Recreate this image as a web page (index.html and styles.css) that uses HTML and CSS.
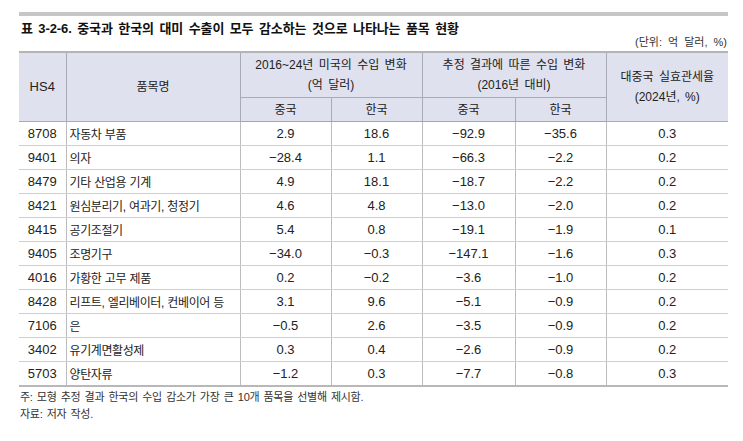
FILE: index.html
```html
<!DOCTYPE html>
<html lang="ko">
<head>
<meta charset="utf-8">
<link rel="stylesheet" href="styles.css">
</head>
<body>
<div class="page">
  <div class="topbar"></div>
  <div class="caption">
    <div class="title">표 3-2-6. 중국과 한국의 대미 수출이 모두 감소하는 것으로 나타나는 품목 현황</div>
    <div class="unit">(단위: 억 달러, %)</div>
  </div>
  <table class="tbl">
    <colgroup>
      <col class="c-hs"><col class="c-name"><col class="c-v"><col class="c-v"><col class="c-v2"><col class="c-v"><col class="c-rate">
    </colgroup>
    <thead>
      <tr class="h1">
        <th rowspan="2" class="num">HS4</th>
        <th rowspan="2">품목명</th>
        <th colspan="2">2016~24년 미국의 수입 변화<br>(억 달러)</th>
        <th colspan="2">추정 결과에 따른 수입 변화<br>(2016년 대비)</th>
        <th rowspan="2">대중국 실효관세율<br>(2024년, %)</th>
      </tr>
      <tr class="h2">
        <th class="sub">중국</th>
        <th class="sub">한국</th>
        <th class="sub">중국</th>
        <th class="sub">한국</th>
      </tr>
    </thead>
    <tbody>
      <tr><td class="num">8708</td><td class="name">자동차 부품</td><td class="num">2.9</td><td class="num lt">18.6</td><td class="num">−92.9</td><td class="num lt">−35.6</td><td class="num">0.3</td></tr>
      <tr><td class="num">9401</td><td class="name">의자</td><td class="num">−28.4</td><td class="num lt">1.1</td><td class="num">−66.3</td><td class="num lt">−2.2</td><td class="num">0.2</td></tr>
      <tr><td class="num">8479</td><td class="name">기타 산업용 기계</td><td class="num">4.9</td><td class="num lt">18.1</td><td class="num">−18.7</td><td class="num lt">−2.2</td><td class="num">0.2</td></tr>
      <tr><td class="num">8421</td><td class="name">원심분리기, 여과기, 청정기</td><td class="num">4.6</td><td class="num lt">4.8</td><td class="num">−13.0</td><td class="num lt">−2.0</td><td class="num">0.2</td></tr>
      <tr><td class="num">8415</td><td class="name">공기조절기</td><td class="num">5.4</td><td class="num lt">0.8</td><td class="num">−19.1</td><td class="num lt">−1.9</td><td class="num">0.1</td></tr>
      <tr><td class="num">9405</td><td class="name">조명기구</td><td class="num">−34.0</td><td class="num lt">−0.3</td><td class="num">−147.1</td><td class="num lt">−1.6</td><td class="num">0.3</td></tr>
      <tr><td class="num">4016</td><td class="name">가황한 고무 제품</td><td class="num">0.2</td><td class="num lt">−0.2</td><td class="num">−3.6</td><td class="num lt">−1.0</td><td class="num">0.2</td></tr>
      <tr><td class="num">8428</td><td class="name">리프트, 엘리베이터, 컨베이어 등</td><td class="num">3.1</td><td class="num lt">9.6</td><td class="num">−5.1</td><td class="num lt">−0.9</td><td class="num">0.2</td></tr>
      <tr><td class="num">7106</td><td class="name">은</td><td class="num">−0.5</td><td class="num lt">2.6</td><td class="num">−3.5</td><td class="num lt">−0.9</td><td class="num">0.2</td></tr>
      <tr><td class="num">3402</td><td class="name">유기계면활성제</td><td class="num">0.3</td><td class="num lt">0.4</td><td class="num">−2.6</td><td class="num lt">−0.9</td><td class="num">0.2</td></tr>
      <tr><td class="num">5703</td><td class="name">양탄자류</td><td class="num">−1.2</td><td class="num lt">0.3</td><td class="num">−7.7</td><td class="num lt">−0.8</td><td class="num">0.3</td></tr>
    </tbody>
  </table>
  <div class="notes">
    <p>주: 모형 추정 결과 한국의 수입 감소가 가장 큰 10개 품목을 선별해 제시함.</p>
    <p>자료: 저자 작성.</p>
  </div>
</div>
</body>
</html>
```

FILE: styles.css
```css
html, body {
  margin: 0;
  padding: 0;
  background: #ffffff;
}
body {
  font-family: "Liberation Sans", "Noto Sans CJK KR", sans-serif;
  color: #222222;
}
.page {
  width: 709px;
  padding-left: 19px;
  padding-top: 12px;
}
.topbar {
  height: 4px;
  background: #c6c6c6;
}
.caption {
  display: flex;
  justify-content: space-between;
  align-items: flex-end;
}
.title {
  margin: 3px 0 10px 2px;
  font-size: 13px;
  line-height: 20px;
  font-weight: 700;
  letter-spacing: -0.1px;
  word-spacing: 2px;
  color: #111111;
  white-space: nowrap;
}
.unit {
  font-size: 11px;
  line-height: 14px;
  letter-spacing: 0;
  word-spacing: 3px;
  color: #333333;
  padding-right: 1px;
  white-space: nowrap;
}
.tbl {
  margin-top: 2px;
  width: 709px;
  border-collapse: collapse;
  table-layout: fixed;
  border-top: 2px solid #b4b4b4;
  border-bottom: 2px solid #b8b8b8;
}
.c-hs { width: 47px; }
.c-name { width: 174px; }
.c-v { width: 91px; }
.c-v2 { width: 93px; }
.c-rate { width: 122px; }
.tbl th, .tbl td {
  padding: 0;
  text-align: center;
  vertical-align: middle;
  border: 1px solid #b9b9b9;
  white-space: nowrap;
}
.tbl tr > :first-child { border-left: none; }
.tbl tr > :last-child { border-right: none; }
.tbl th {
  background: #dfe1ee;
  font-weight: 400;
  font-size: 12px;
  letter-spacing: 0;
  word-spacing: 2px;
  line-height: 20px;
  color: #222222;
  border-color: #a9abb4;
}
.tbl th.num {
  font-size: 13px;
  letter-spacing: 0;
}
.tbl thead tr.h2 th { border-bottom: 1px solid #a6a6a6; }
.tbl .h1 th { height: 44px; }
.tbl .h2 th { height: 23px; }
.tbl td {
  height: 23px;
  border-color: #cfcfcf #bcbcbc;
}
.tbl td.num {
  font-size: 13px;
  color: #222222;
}
.tbl td.lt { border-left-color: #dadada; }
.tbl td.name {
  text-align: left;
  padding-left: 3px;
  font-size: 12px;
  letter-spacing: -0.4px;
  word-spacing: 0.5px;
}
.notes {
  margin-top: 2px;
  padding-left: 1px;
}
.notes p {
  margin: 0;
  font-size: 11px;
  line-height: 17px;
  letter-spacing: -0.3px;
  word-spacing: 1.5px;
  color: #333333;
}
```
